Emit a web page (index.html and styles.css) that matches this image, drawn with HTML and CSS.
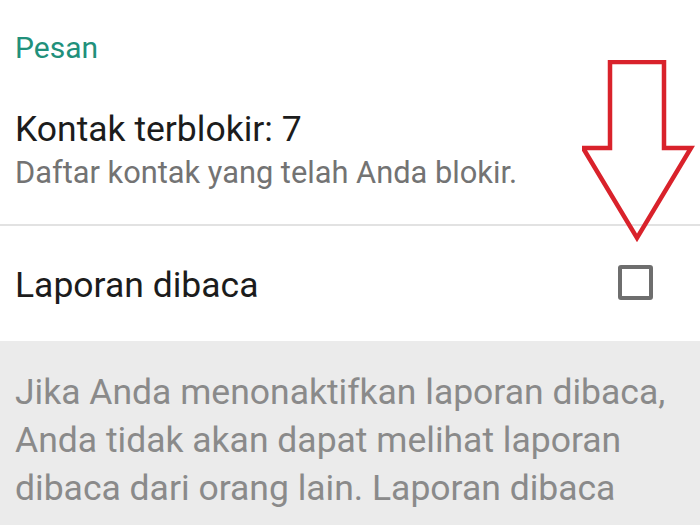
FILE: index.html
```html
<!DOCTYPE html>
<html lang="id">
<head>
  <meta charset="UTF-8">
  <meta name="viewport" content="width=device-width, initial-scale=1.0">
  <title>Pesan</title>
  <link rel="stylesheet" href="styles.css">
</head>
<body>

  <div class="screen">
    <div class="section-title">Pesan</div>

    <div class="pref">
      <div class="pref-title">Kontak terblokir: 7</div>
      <div class="pref-summary">Daftar kontak yang telah Anda blokir.</div>
    </div>

    <div class="divider"></div>

    <div class="pref-row">
      <span class="row-title">Laporan dibaca</span>
      <span class="checkbox"></span>
    </div>

    <div class="note">
      <p>Jika Anda menonaktifkan laporan dibaca,<br>Anda tidak akan dapat melihat laporan<br>dibaca dari orang lain. Laporan dibaca</p>
    </div>

    <svg class="arrow" width="120" height="190" viewBox="0 0 120 190">
      <polygon points="28,2 82,2 82,88 109,88 55,178 1,88 28,88" fill="none" stroke="#d9222b" stroke-width="4.5" stroke-linejoin="miter"/>
    </svg>
  </div>

</body>
</html>
```

FILE: styles.css
```css
body {
  font-family: 'Roboto', 'Noto Sans', sans-serif;
  background-color: #fff;
  margin: 0;
  padding: 0;
}
.screen {
  position: relative;
  height: 525px;
  overflow: hidden;
}
.section-title {
  padding: 31px 15px 0;
  font-size: 30px;
  line-height: 34px;
  color: #21907b;
}
.pref {
  padding: 43px 15px 34px;
}
.pref-title {
  font-size: 35.5px;
  line-height: 42px;
  color: #1c1c1c;
}
.pref-summary {
  margin-top: 6px;
  font-size: 30.8px;
  line-height: 34px;
  color: #737373;
}
.divider {
  height: 2px;
  background-color: #e2e2e2;
}
.pref-row {
  display: flex;
  align-items: center;
  justify-content: space-between;
  height: 115px;
  padding: 0 47px 0 15px;
}
.row-title {
  font-size: 35.5px;
  line-height: 44px;
  color: #1c1c1c;
  margin-top: 2px;
}
.checkbox {
  width: 27px;
  height: 27px;
  border: 4px solid #6e6e6e;
  border-radius: 3px;
  margin-top: -3px;
}
.note {
  background-color: #ebebeb;
  height: 184px;
  padding: 27px 15px 0;
}
.note p {
  margin: 0;
  font-size: 35.5px;
  line-height: 48px;
  color: #8a8a8a;
  white-space: nowrap;
}
.arrow {
  position: absolute;
  left: 582px;
  top: 60px;
}
```
